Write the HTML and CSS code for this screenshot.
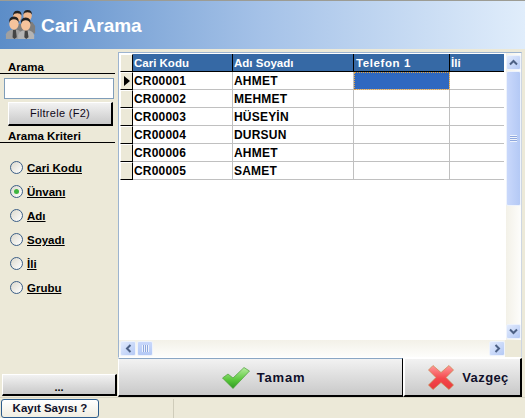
FILE: index.html
```html
<!DOCTYPE html>
<html lang="tr">
<head>
  <meta charset="UTF-8" />
  <title>Cari Arama</title>
  <link rel="stylesheet" href="styles.css">
</head>
<body>
  <div class="window">
    <header class="title-bar">
      <svg class="people-icon" width="32" height="32" viewBox="0 0 34 34">
        <path d="M9 20 l4 -3 h6 l4 3 v6 H9z" fill="#7d7d7d"/>
        <ellipse cx="13" cy="9" rx="4.500" ry="5.500" fill="#f0b98f"/>
        <path d="M8.500 8 q0 -5 4.500 -5 q5 0 4.500 5 q-1 -2.500 -4.500 -2.500 q-3.500 0 -4.500 2.500z" fill="#222"/>
        <path d="M19 18 l5 -3 h5 l3 4 v8 H19z" fill="#7d7d7d"/>
        <ellipse cx="24" cy="8" rx="4.500" ry="5.500" fill="#f0b98f"/>
        <path d="M19.500 7 q0 -5 4.500 -5 q5 0 4.500 5 q-1 -2.500 -4.500 -2.500 q-3.500 0 -4.500 2.500z" fill="#222"/>
        <path d="M1 33 v-5 q1 -4 6 -5 h6 q4 1 5 5 v5z" fill="#a0a0a0"/>
        <path d="M8.500 23 h3 l1 8 l-2.500 2 l-2 -2z" fill="#444"/>
        <ellipse cx="9.500" cy="17" rx="5" ry="6" fill="#f6c39c"/>
        <path d="M4.500 16 q-1 -7 5 -7 q6 0 5 7 q-1 -4 -5 -4 q-4 0 -5 4z" fill="#222"/>
        <path d="M14 33 v-4 q1 -4 5 -5 h7 q4 1 5 5 v4z" fill="#b4b4b4"/>
        <path d="M21 24 h3 l1 7 l-2.500 2 l-2 -2z" fill="#444"/>
        <ellipse cx="22" cy="18" rx="5" ry="6" fill="#f6c39c"/>
        <path d="M17 17 q-1 -7 5 -7 q6 0 5 7 q-1 -4 -5 -4 q-4 0 -5 4z" fill="#222"/>
      </svg>
      <h1 class="title">Cari Arama</h1>
    </header>

    <div class="content">
      <aside class="side">
        <div class="side-label side-label-first">Arama</div>
        <input class="search-input" type="text">
        <div class="filter-wrap"><button class="btn filter-btn">Filtrele (F2)</button></div>
        <div class="side-label">Arama Kriteri</div>
        <ul class="radio-list">
          <li><span class="radio"></span><u>Cari Kodu</u></li>
          <li><span class="radio checked"></span><u>Ünvanı</u></li>
          <li><span class="radio"></span><u>Adı</u></li>
          <li><span class="radio"></span><u>Soyadı</u></li>
          <li><span class="radio"></span><u>İli</u></li>
          <li><span class="radio"></span><u>Grubu</u></li>
        </ul>
        <button class="btn more-btn">...</button>
      </aside>

      <main class="main">
        <div class="grid-box">
          <div class="grid-top">
            <div class="grid-area">
              <table class="grid">
                <colgroup>
                  <col class="col-ind"><col class="col-kod"><col class="col-ad"><col class="col-tel"><col class="col-il">
                </colgroup>
                <thead>
                  <tr><th class="ind"></th><th>Cari Kodu</th><th>Adı Soyadı</th><th class="wide">Telefon 1</th><th>İli</th></tr>
                </thead>
                <tbody>
                  <tr><td class="ind current"><span class="arrow"></span></td><td>CR00001</td><td>AHMET</td><td class="selected"></td><td></td></tr>
                  <tr><td class="ind"></td><td>CR00002</td><td>MEHMET</td><td></td><td></td></tr>
                  <tr><td class="ind"></td><td>CR00003</td><td>HÜSEYİN</td><td></td><td></td></tr>
                  <tr><td class="ind"></td><td>CR00004</td><td>DURSUN</td><td></td><td></td></tr>
                  <tr><td class="ind"></td><td>CR00006</td><td>AHMET</td><td></td><td></td></tr>
                  <tr><td class="ind"></td><td>CR00005</td><td>SAMET</td><td></td><td></td></tr>
                </tbody>
              </table>
            </div>
            <div class="vscroll">
              <div class="sb-btn"><svg width="9" height="7" viewBox="0 0 9 7"><path d="M1 5.500 L4.500 2 L8 5.500" fill="none" stroke="#4d6185" stroke-width="2"/></svg></div>
              <div class="vthumb"><span class="grip-h"></span></div>
              <div class="vtrack"></div>
              <div class="sb-btn"><svg width="9" height="7" viewBox="0 0 9 7"><path d="M1 1.500 L4.500 5 L8 1.500" fill="none" stroke="#4d6185" stroke-width="2"/></svg></div>
            </div>
          </div>
          <div class="hrow">
            <div class="hscroll">
              <div class="sb-btn"><svg width="7" height="9" viewBox="0 0 7 9"><path d="M5.500 1 L2 4.500 L5.500 8" fill="none" stroke="#4d6185" stroke-width="2"/></svg></div>
              <div class="hthumb"><span class="grip-v"></span></div>
              <div class="htrack"></div>
              <div class="sb-btn"><svg width="7" height="9" viewBox="0 0 7 9"><path d="M1.500 1 L5 4.500 L1.500 8" fill="none" stroke="#4d6185" stroke-width="2"/></svg></div>
            </div>
            <div class="corner"></div>
          </div>
        </div>
        <div class="actions">
          <button class="btn action-btn ok-btn">
            <svg width="28" height="22" viewBox="0 0 28 22">
              <defs>
                <linearGradient id="chk" x1="0" y1="0" x2="0" y2="1">
                  <stop offset="0" stop-color="#b7eda0"/><stop offset="0.6" stop-color="#58c63a"/><stop offset="1" stop-color="#2f9a22"/>
                </linearGradient>
              </defs>
              <path d="M0.500 11 L6 7 L11 11 L22 0.500 L27.500 4 L11 21.500z" fill="url(#chk)" stroke="#4a9e3a" stroke-width="0.700"/>
            </svg>
            <span>Tamam</span>
          </button>
          <button class="btn action-btn cancel-btn">
            <svg width="26" height="25" viewBox="0 0 26 25">
              <defs>
                <linearGradient id="crs" x1="0" y1="0" x2="0" y2="1">
                  <stop offset="0" stop-color="#ff9a9a"/><stop offset="0.55" stop-color="#f4474b"/><stop offset="1" stop-color="#e8383c"/>
                </linearGradient>
              </defs>
              <path d="M0.500 5 L5 0.500 L13 7.500 L21 0.500 L25.500 5 L18 12.500 L25.500 20 L21 24.500 L13 17.500 L5 24.500 L0.500 20 L8 12.500z" fill="url(#crs)" stroke="#c9884a" stroke-width="0.700"/>
            </svg>
            <span>Vazgeç</span>
          </button>
        </div>
      </main>
    </div>

    <footer class="status-bar">
      <button class="count-btn">Kayıt Sayısı ?</button>
      <div class="status-panel"></div>
      <div class="status-panel status-rest"></div>
    </footer>
  </div>
</body>
</html>
```

FILE: styles.css
```css
html, body {
  margin: 0;
  padding: 0;
}

body {
  width: 525px;
  height: 418px;
  overflow: hidden;
  background-color: #ece9d8;
  font-family: "Liberation Sans", Arial, sans-serif;
  font-size: 11.5px;
  font-weight: bold;
  color: #000;
}

.window {
  display: flex;
  flex-direction: column;
  height: 418px;
}

/* Title */
.title-bar {
  display: flex;
  align-items: center;
  height: 48px;
  padding-left: 5px;
  border-top: 1px solid #9c9c94;
  background: linear-gradient(to right, #5c8dc8, #a5c2e8 50%, #e0edfb);
  box-sizing: content-box;
}

.people-icon {
  margin-bottom: 1px;
}

.title {
  margin: 3px 0 0 4px;
  font-size: 19px;
  color: #fff;
}

/* Content */
.content {
  display: flex;
  height: 348px;
  padding-top: 3px;
}

.side {
  display: flex;
  flex-direction: column;
  width: 118px;
  flex-shrink: 0;
}

.side-label {
  width: 115px;
  height: 15px;
  padding-left: 8px;
  box-sizing: border-box;
  border-bottom: 1px solid #000;
  line-height: 17px;
}

.side-label-first {
  margin-top: 7px;
}

.search-input {
  width: 110px;
  height: 21px;
  margin: 4px 0 0 4px;
  padding: 0;
  box-sizing: border-box;
  border: 1px solid #7f9db9;
  background: #fff;
}

.filter-wrap {
  padding: 3px 0 2px 8px;
}

.btn {
  margin: 0;
  padding: 0;
  font-family: inherit;
  font-weight: bold;
  box-sizing: border-box;
  border: 0;
  border-top: 1px solid #fff;
  border-left: 1px solid #fff;
  border-right: 2px solid #000;
  border-bottom: 2px solid #000;
  background: linear-gradient(to bottom, #f2f2f2, #c9c9c9);
  color: #000;
}

.filter-btn {
  display: block;
  width: 105px;
  height: 24px;
  font-size: 11px;
  font-weight: normal;
  color: #100818;
  letter-spacing: 0.3px;
}

.radio-list {
  list-style: none;
  margin: 13px 0 0 0;
  padding: 0;
}

.radio-list li {
  display: flex;
  align-items: center;
  height: 24px;
  padding-left: 10px;
}

.radio-list u {
  margin-left: 4px;
}

.radio {
  position: relative;
  width: 13px;
  height: 13px;
  box-sizing: border-box;
  border: 1px solid #3c5f87;
  border-radius: 50%;
  background: linear-gradient(135deg, #dcd9cd, #fff);
}

.radio.checked::after {
  content: "";
  position: absolute;
  left: 3px;
  top: 3px;
  width: 5px;
  height: 5px;
  border-radius: 50%;
  background: #3fb53f;
}

.more-btn {
  margin: auto 0 1px 2px;
  width: 115px;
  height: 22px;
  font-size: 11px;
  line-height: 16px;
  padding-top: 4px;
}

/* Grid */
.main {
  display: flex;
  flex-direction: column;
  width: 405px;
  height: 345px;
}

.grid-box {
  display: flex;
  flex-direction: column;
  width: 404px;
  height: 306px;
  box-sizing: border-box;
  border: 1px solid #9db4cf;
  border-bottom: 1px solid #fff;
  border-right: 1px solid #cdd6e2;
  background: #fff;
}

.grid-top {
  display: flex;
  height: 287px;
}

.grid-area {
  width: 387px;
  padding: 1px 0 0 1px;
  box-sizing: border-box;
}

.grid {
  table-layout: fixed;
  width: 384px;
  border-collapse: separate;
  border-spacing: 0;
}

.col-ind { width: 13px; }
.col-kod { width: 100px; }
.col-ad { width: 121px; }
.col-tel { width: 96px; }
.col-il { width: 54px; }

.grid th,
.grid td {
  height: 18px;
  padding: 0 0 0 1px;
  box-sizing: border-box;
  text-align: left;
  white-space: nowrap;
  overflow: hidden;
}

.grid th {
  padding-top: 1px;
  background: #3669a5;
  color: #fff;
  border-right: 1px solid #000;
  border-bottom: 1px solid #000;
}

.grid th.wide {
  padding-left: 2px;
  letter-spacing: 0.6px;
}

.grid td {
  padding-top: 2px;
  font-size: 12px;
  letter-spacing: 0.2px;
  border-right: 1px solid #c0c0c0;
  border-bottom: 1px solid #c0c0c0;
}

.grid th.ind,
.grid td.ind {
  padding: 0;
  background: #ece9d8;
  border-top: 1px solid #fff;
  border-left: 1px solid #fff;
  border-right: 1px solid #000;
  border-bottom: 1px solid #000;
}

.grid tr > :last-child {
  border-right: 0;
}

.grid td.selected {
  background: #2f68c0;
  outline: 1px dotted #e8a33d;
  outline-offset: -1px;
}

.arrow {
  display: block;
  width: 0;
  height: 0;
  margin-left: 3px;
  border-left: 6px solid #000;
  border-top: 5px solid transparent;
  border-bottom: 5px solid transparent;
}

/* Scrollbars */
.sb-btn {
  display: flex;
  align-items: center;
  justify-content: center;
  flex-shrink: 0;
  width: 15px;
  height: 15px;
  box-sizing: border-box;
  border: 1px solid #eef3fc;
  border-radius: 2px;
  background: linear-gradient(135deg, #e2ebfd, #b4c9f5);
}

.vscroll {
  display: flex;
  flex-direction: column;
  width: 15px;
  height: 287px;
  padding-top: 2px;
  padding-bottom: 1px;
  box-sizing: border-box;
  background: linear-gradient(to right, #f3f1e8, #fdfdfb);
}

.vthumb {
  display: flex;
  align-items: center;
  justify-content: center;
  width: 15px;
  height: 135px;
  margin-top: 1px;
  box-sizing: border-box;
  border: 1px solid #eef3fc;
  border-radius: 2px;
  background: linear-gradient(to right, #c9d8fb, #b4c9f5);
}

.grip-h {
  width: 7px;
  height: 7px;
  background: repeating-linear-gradient(to bottom, #eef3fc 0, #eef3fc 1px, #8fa8de 1px, #8fa8de 2px);
}

.vtrack {
  flex: 1;
}

.hrow {
  display: flex;
  height: 17px;
}

.hscroll {
  display: flex;
  align-items: flex-start;
  width: 386px;
  padding: 1px 0 0 1px;
  box-sizing: border-box;
  background: linear-gradient(to bottom, #f3f1e8, #fdfdfb);
}

.hscroll .sb-btn {
  width: 16px;
}

.hthumb {
  display: flex;
  align-items: center;
  justify-content: center;
  width: 16px;
  height: 15px;
  margin-left: 1px;
  box-sizing: border-box;
  border: 1px solid #eef3fc;
  border-radius: 2px;
  background: linear-gradient(to bottom, #c9d8fb, #b4c9f5);
}

.grip-v {
  width: 7px;
  height: 7px;
  background: repeating-linear-gradient(to right, #eef3fc 0, #eef3fc 1px, #8fa8de 1px, #8fa8de 2px);
}

.htrack {
  flex: 1;
}

.corner {
  flex: 1;
  background: #ece9d8;
}

/* Buttons */
.actions {
  display: flex;
  width: 405px;
  height: 39px;
}

.action-btn {
  display: flex;
  align-items: center;
  justify-content: center;
  height: 39px;
  font-size: 13px;
  letter-spacing: 0.8px;
  color: #10102a;
}

.ok-btn {
  width: 285px;
  padding: 2px 0 0 6px;
  border-top-color: #8aa6c4;
  border-right-width: 1px;
}

.ok-btn span {
  margin-left: 7px;
}

.cancel-btn {
  width: 119px;
  padding: 2px 0 0 12px;
  border-left-width: 2px;
  letter-spacing: 0.4px;
}

.cancel-btn span {
  margin-left: 8px;
}

/* Status bar */
.status-bar {
  display: flex;
  align-items: center;
  height: 21px;
  padding: 0 0 0 1px;
  box-sizing: border-box;
  border-top: 1px solid #d8d5c4;
}

.count-btn {
  width: 98px;
  height: 19px;
  padding: 0;
  font-family: inherit;
  font-size: 11.5px;
  font-weight: bold;
  box-sizing: border-box;
  border: 1px solid #2c5c8c;
  border-radius: 3px;
  background: linear-gradient(to bottom, #fff, #f0eee2);
  color: #10102a;
}

.status-panel {
  width: 74px;
  height: 19px;
  border-right: 1px solid #cfccba;
}

.status-rest {
  flex: 1;
  border-right: 0;
}
```
